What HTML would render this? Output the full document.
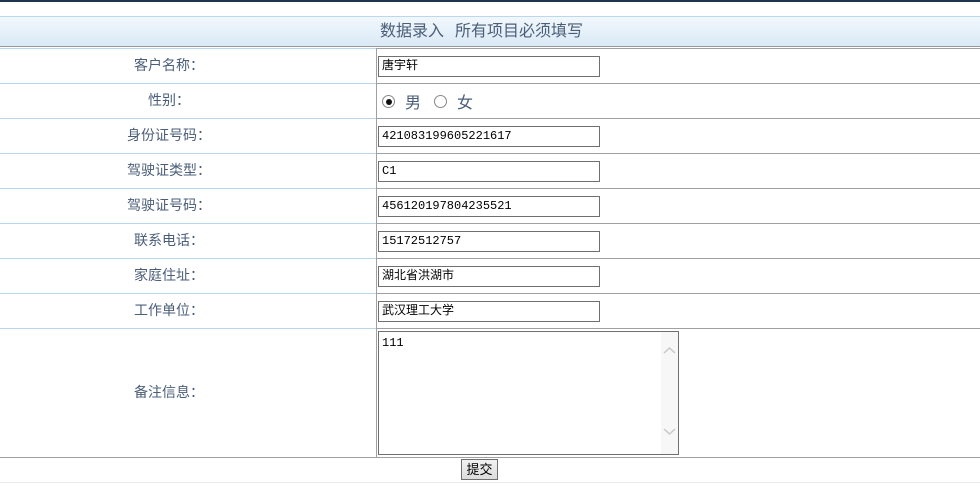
<!DOCTYPE html>
<html><head><meta charset="utf-8"><style>
body{margin:0;width:980px;height:491px;background:#fff;position:relative;overflow:hidden;font-family:"Liberation Sans","Noto Sans CJK SC","WenQuanYi Zen Hei",sans-serif}
.a{position:absolute}
.lbl{position:absolute;left:0;width:338px;text-align:center;font-size:14px;color:#4b5e78;line-height:35px}
.hl{position:absolute;left:0;width:376px;height:1px;background:#b9d8ee}
.hr{position:absolute;left:376px;width:604px;height:1px;background:#a0a0a0}
.inp{position:absolute;left:378px;border:1px solid #707070;font-size:12px;line-height:19px;padding-left:3px;box-sizing:border-box;width:222px;height:21px;color:#000;font-family:"Liberation Mono","Noto Sans CJK SC",monospace}
</style></head><body>
<div class="a" style="left:0;top:0;width:980px;height:2px;background:#1c3550"></div>
<div class="a" style="left:0;top:16px;width:980px;height:1px;background:#b9d8ee"></div>
<div class="a" style="left:0;top:17px;width:980px;height:29px;background:linear-gradient(#f2f8fd,#d9e9f5)"></div>
<div class="a" style="left:0;top:46px;width:980px;height:1px;background:#9a9a9a"></div>
<div class="a" style="left:380px;top:17px;line-height:29px;font-size:16px;color:#4b5e78;white-space:nowrap">数据录入<span style="display:inline-block;width:11px"></span>所有项目必须填写</div>
<div class="hl" style="top:48px"></div><div class="hr" style="top:48px"></div>
<div class="a" style="left:376px;top:48px;width:1px;height:409px;background:#a0a0a0"></div>

<div class="lbl" style="top:48px">客户名称：</div>
<div class="inp" style="top:56px">唐宇轩</div>
<div class="hl" style="top:83px"></div><div class="hr" style="top:83px"></div>

<div class="lbl" style="top:83px">性别：</div>
<div class="a" style="left:382px;top:95px;width:13px;height:13px;border:1px solid #888;border-radius:50%;box-sizing:border-box"></div>
<div class="a" style="left:385.5px;top:98.5px;width:6px;height:6px;background:#111;border-radius:50%"></div>
<div class="a" style="left:405px;top:89px;font-size:16px;color:#4b5e78">男</div>
<div class="a" style="left:434px;top:95px;width:13px;height:13px;border:1px solid #888;border-radius:50%;box-sizing:border-box"></div>
<div class="a" style="left:457px;top:89px;font-size:16px;color:#4b5e78">女</div>
<div class="hl" style="top:118px"></div><div class="hr" style="top:118px"></div>

<div class="lbl" style="top:118px">身份证号码：</div>
<div class="inp" style="top:126px">421083199605221617</div>
<div class="hl" style="top:153px"></div><div class="hr" style="top:153px"></div>

<div class="lbl" style="top:153px">驾驶证类型：</div>
<div class="inp" style="top:161px">C1</div>
<div class="hl" style="top:188px"></div><div class="hr" style="top:188px"></div>

<div class="lbl" style="top:188px">驾驶证号码：</div>
<div class="inp" style="top:196px">456120197804235521</div>
<div class="hl" style="top:223px"></div><div class="hr" style="top:223px"></div>

<div class="lbl" style="top:223px">联系电话：</div>
<div class="inp" style="top:231px">15172512757</div>
<div class="hl" style="top:258px"></div><div class="hr" style="top:258px"></div>

<div class="lbl" style="top:258px">家庭住址：</div>
<div class="inp" style="top:266px">湖北省洪湖市</div>
<div class="hl" style="top:293px"></div><div class="hr" style="top:293px"></div>

<div class="lbl" style="top:293px">工作单位：</div>
<div class="inp" style="top:301px">武汉理工大学</div>
<div class="hl" style="top:328px"></div><div class="hr" style="top:328px"></div>

<div class="lbl" style="top:328px;line-height:129px">备注信息：</div>
<div class="a" style="left:378px;top:331px;width:301px;height:124px;border:1px solid #707070;box-sizing:border-box;font-size:12px;font-family:'Liberation Mono',monospace;padding:4px 3px">111</div>
<div class="a" style="left:661px;top:332px;width:17px;height:122px;background:#f7f7f7"></div>
<svg class="a" style="left:662px;top:346px" width="15" height="10"><path d="M2 7 L7.5 2 L13 7" stroke="#c8c8c8" stroke-width="1.5" fill="none"/></svg>
<svg class="a" style="left:662px;top:426px" width="15" height="10"><path d="M2 3 L7.5 8 L13 3" stroke="#c8c8c8" stroke-width="1.5" fill="none"/></svg>
<div class="a" style="left:0;top:457px;width:980px;height:1px;background:#a0a0a0"></div>

<div class="a" style="left:461px;top:459px;width:37px;height:21px;border:1px solid #707070;box-sizing:border-box;background:linear-gradient(#f2f2f2,#dcdcdc);font-size:13px;text-align:center;line-height:19px;color:#000">提交</div>
<div class="a" style="left:0;top:482px;width:980px;height:1px;background:#ececec"></div>
</body></html>
